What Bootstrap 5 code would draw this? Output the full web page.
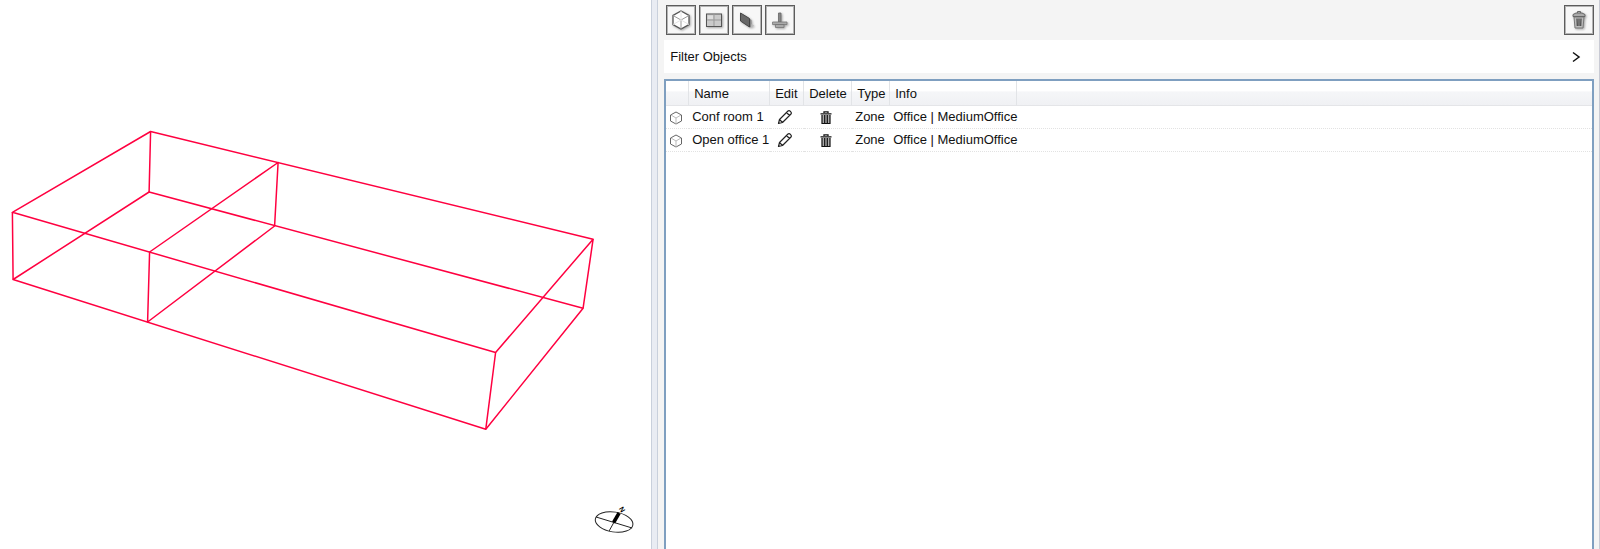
<!DOCTYPE html>
<html lang="en">
<head>
<meta charset="utf-8">
<meta name="viewport" content="width=device-width, initial-scale=1">
<title>Building zones</title>
<link href="https://cdn.jsdelivr.net/npm/bootstrap@5.3.0/dist/css/bootstrap.min.css" rel="stylesheet">
<style>
  body { font-family: "Liberation Sans", Arial, sans-serif; font-size: 13px; line-height: 16px; color: #111; }
  .view-pane { flex: 0 0 40.7%; }
  .splitter { flex: 0 0 7px; background: #e9ecf3; border: solid #c9d0dc; border-width: 0 1px; }
  .side-pane { background: #f4f4f4; border-right: 1px solid #c8cad4; padding: 5px 5px 0 6px; }
  .tool-row { gap: 3px; margin-bottom: 5px; padding-left: 2px; }
  .tool-btn { width: 30px; height: 30px; padding: 0; border: 1px solid #5c5c5c; box-shadow: inset 0 0 0 1px #b4b4b4; background: #f7f7f7; display: flex; align-items: center; justify-content: center; }
  .tool-btn svg { filter: drop-shadow(1px 1px 1px #0005); }
  .filter-bar { height: 33px; padding: 0 13px 0 6px; border: 0; background: #fff; color: #111; margin-bottom: 6px; }
  .object-list { border: 2px solid #7f9fc0; border-bottom: 0; background: #fff; }
  .object-grid { table-layout: fixed; width: 100%; border-collapse: separate; border-spacing: 0; }
  .object-grid th { height: 25px; padding: 1px 0 0 5px; font-weight: 400; border-right: 1px solid #e2e4e7; border-bottom: 1px solid #e4e5e8; background: linear-gradient(#fff 0 40%, #f5f6f8 46%, #f0f1f4); }
  .object-grid th:last-child { border-right: 0; }
  .object-grid td { height: 23px; padding: 0 0 0 3px; white-space: nowrap; border-bottom: 1px dotted #e2e2e2; }
  .object-grid .icon-cell { padding: 0 4px 0 0; text-align: center; }
  .cell-btn { padding: 0; border: 0; background: none; display: inline-block; line-height: 0; vertical-align: middle; }
</style>
</head>
<body>
<div class="d-flex vh-100 overflow-hidden">
  <main class="view-pane bg-white">
    <svg class="d-block w-100 h-100" viewBox="0 0 651 549" role="img" aria-label="Zone wireframe">
      <g fill="none" stroke="#ff0040" stroke-width="1.5" stroke-linejoin="round">
        <path d="M12.3 212.3 150.500 131.5 593 239.2 495.5 352.5Z"/>
        <path d="M13 279.5 149 192 583 308.2 485.7 429.2Z"/>
        <path d="M12.3 212.3 13 279.5M150.500 131.5 149 192M593 239.2 583 308.2M495.5 352.5 485.7 429.2"/>
        <path d="M278 162.5 274.5 226 147.500 322 149.5 252Z"/>
      </g>
      <g fill="none" stroke="#222" stroke-width="1">
        <ellipse cx="614" cy="522" rx="19" ry="10" transform="rotate(9 614 522)"/>
        <path d="M596 517 632 528M609 531 614 522"/>
        <path d="M613.5 522.5 619 513" stroke="#000" stroke-width="3.5"/>
      </g>
      <text x="622" y="512" font-size="7" font-weight="700" text-anchor="middle" transform="rotate(60 622 509.500)">N</text>
    </svg>
  </main>
  <div class="splitter"></div>
  <section class="side-pane d-flex flex-column flex-grow-1">
    <div class="tool-row d-flex">
      <button class="tool-btn" type="button" aria-label="Add zone"><svg width="20" height="22" viewBox="0 0 20 22"><path d="M10 2 18 6.500V15.500L10 20 2 15.500V6.500Z" fill="#fff" stroke="#555" stroke-width="1.300"/><path d="M2 6.500 10 11 18 6.500M10 11V20" fill="none" stroke="#999"/><path d="M10 2V11L2 15.500M10 11 18 15.500" fill="none" stroke="#e4e4e4"/></svg></button>
      <button class="tool-btn" type="button" aria-label="Add window"><svg width="20" height="20" viewBox="0 0 20 20"><rect x="2.500" y="4" width="15" height="12.500" fill="#cacaca" stroke="#555"/><path d="M10 4V16M3 10H17" stroke="#999"/><path d="M4 5.500H9V9H4Z" fill="#dedede"/></svg></button>
      <button class="tool-btn" type="button" aria-label="Add surface"><svg width="20" height="20" viewBox="0 0 20 20"><path d="M3.500 3 12.500 8.500V17L3.500 11Z" fill="#686868" stroke="#444"/><path d="M13 9 14.500 10V16.500L13 17.500Z" fill="#888"/><path d="M14 17.500 17 15.500 14.500 14Z" fill="#bbb"/></svg></button>
      <button class="tool-btn" type="button" aria-label="Add ground"><svg width="20" height="20" viewBox="0 0 20 20"><path d="M8.500 3H11V12H8.500Z" fill="#888" stroke="#666" stroke-width=".8"/><path d="M2.500 12H17V14.500H2.500ZM5.500 14.500H14V17.500H5.500Z" fill="#aaa" stroke="#777" stroke-width=".8"/></svg></button>
      <button class="tool-btn ms-auto" type="button" aria-label="Delete all"><svg width="18" height="20" viewBox="0 0 18 20"><path d="M4 7H14L13 18H5Z" fill="#bbb" stroke="#777"/><path d="M7 8.500 7.300 16M9 8.500V16M11 8.500 10.700 16" stroke="#444" stroke-width="1.200"/><path d="M3 4.500 6 3H12L15 4.500V6.500H3Z" fill="#aaa" stroke="#666"/><path d="M7.500 3V1.500H10.500V3" fill="none" stroke="#666"/></svg></button>
    </div>
    <button class="filter-bar d-flex align-items-center justify-content-between flex-shrink-0" type="button">
      <span>Filter Objects</span>
      <svg width="10" height="12" viewBox="0 0 10 12"><path d="M2 1.500 8 6 2 10.500" fill="none" stroke="#111" stroke-width="1.500"/></svg>
    </button>
    <div class="object-list flex-grow-1">
      <table class="object-grid">
        <colgroup><col width="23"><col width="81"><col width="34"><col width="48"><col width="38"><col width="127"><col></colgroup>
        <thead>
          <tr><th scope="col"></th><th scope="col">Name</th><th scope="col">Edit</th><th scope="col">Delete</th><th scope="col">Type</th><th scope="col">Info</th><th></th></tr>
        </thead>
        <tbody>
          <tr>
            <td class="icon-cell"><svg width="12" height="14" viewBox="0 0 12 14"><path d="M6 1 11.500 4V10L6 13 .5 10V4Z" fill="#fff" stroke="#666"/><path d="M1 4 6 7 11 4M6 7V13" fill="none" stroke="#bbb"/></svg></td>
            <td>Conf room 1</td>
            <td class="icon-cell"><button class="cell-btn" type="button" aria-label="Edit Conf room 1"><svg width="16" height="16" viewBox="0 0 16 16"><path d="M1.500 14.500 2.500 10.500 11 2Q12 1 13.200 2.200L13.800 2.800Q15 4 14 5L5.500 13.500ZM9.500 3.500 12.500 6.500M2.500 10.500 5.500 13.500" fill="none" stroke="#222" stroke-width="1.200" stroke-linejoin="round"/></svg></button></td>
            <td class="icon-cell"><button class="cell-btn" type="button" aria-label="Delete Conf room 1"><svg width="12" height="14" viewBox="0 0 12 14"><path d="M4 2V.8H8V2M.5 2.800H11.500" fill="none" stroke="#111" stroke-width="1.300"/><path d="M2 4V12.500H10V4M4.700 4V12M7.300 4V12" fill="#aaa" stroke="#111" stroke-width="1.200"/></svg></button></td>
            <td>Zone</td><td>Office | MediumOffice</td><td></td>
          </tr>
          <tr>
            <td class="icon-cell"><svg width="12" height="14" viewBox="0 0 12 14"><path d="M6 1 11.500 4V10L6 13 .5 10V4Z" fill="#fff" stroke="#666"/><path d="M1 4 6 7 11 4M6 7V13" fill="none" stroke="#bbb"/></svg></td>
            <td>Open office 1</td>
            <td class="icon-cell"><button class="cell-btn" type="button" aria-label="Edit Open office 1"><svg width="16" height="16" viewBox="0 0 16 16"><path d="M1.500 14.500 2.500 10.500 11 2Q12 1 13.200 2.200L13.800 2.800Q15 4 14 5L5.500 13.500ZM9.500 3.500 12.500 6.500M2.500 10.500 5.500 13.500" fill="none" stroke="#222" stroke-width="1.200" stroke-linejoin="round"/></svg></button></td>
            <td class="icon-cell"><button class="cell-btn" type="button" aria-label="Delete Open office 1"><svg width="12" height="14" viewBox="0 0 12 14"><path d="M4 2V.8H8V2M.5 2.800H11.500" fill="none" stroke="#111" stroke-width="1.300"/><path d="M2 4V12.500H10V4M4.700 4V12M7.300 4V12" fill="#aaa" stroke="#111" stroke-width="1.200"/></svg></button></td>
            <td>Zone</td><td>Office | MediumOffice</td><td></td>
          </tr>
        </tbody>
      </table>
    </div>
  </section>
</div>
<script src="https://cdn.jsdelivr.net/npm/bootstrap@5.3.0/dist/js/bootstrap.bundle.min.js"></script>
</body>
</html>
